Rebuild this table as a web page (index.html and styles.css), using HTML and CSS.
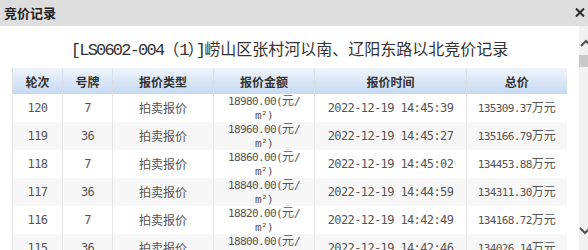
FILE: index.html
```html
<!DOCTYPE html>
<html lang="zh-CN">
<head>
<meta charset="utf-8">
<title>竞价记录</title>
<link rel="stylesheet" href="styles.css">
</head>
<body>
<div class="dialog">
  <div class="titlebar">
    <span class="title">竞价记录</span>
    <svg class="close" width="10" height="9" viewBox="0 0 10 9"><path d="M1 0.5 L9 8.5 M9 0.5 L1 8.5" stroke="#2b2b2b" stroke-width="2" fill="none"/></svg>
  </div>
  <div class="content">
    <div class="main">
      <h1 class="heading"><span class="lat">[LS0602-004</span>（<span class="lat">1</span>）<span class="lat">]</span>崂山区张村河以南、辽阳东路以北竞价记录</h1>
      <table class="records">
        <colgroup>
          <col class="c1"><col class="c2"><col class="c3"><col class="c4"><col class="c5"><col class="c6">
        </colgroup>
        <thead>
          <tr><th>轮次</th><th>号牌</th><th>报价类型</th><th>报价金额</th><th>报价时间</th><th>总价</th></tr>
        </thead>
        <tbody>
          <tr><td class="num">120</td><td class="num">7</td><td class="type">拍卖报价</td><td class="amt"><span class="num">18980.00(</span>元<span class="num">/</span><br><span class="num">m²)</span></td><td class="num">2022-12-19 14:45:39</td><td class="total"><span class="num">135309.37</span>万元</td></tr>
          <tr><td class="num">119</td><td class="num">36</td><td class="type">拍卖报价</td><td class="amt"><span class="num">18960.00(</span>元<span class="num">/</span><br><span class="num">m²)</span></td><td class="num">2022-12-19 14:45:27</td><td class="total"><span class="num">135166.79</span>万元</td></tr>
          <tr><td class="num">118</td><td class="num">7</td><td class="type">拍卖报价</td><td class="amt"><span class="num">18860.00(</span>元<span class="num">/</span><br><span class="num">m²)</span></td><td class="num">2022-12-19 14:45:02</td><td class="total"><span class="num">134453.88</span>万元</td></tr>
          <tr><td class="num">117</td><td class="num">36</td><td class="type">拍卖报价</td><td class="amt"><span class="num">18840.00(</span>元<span class="num">/</span><br><span class="num">m²)</span></td><td class="num">2022-12-19 14:44:59</td><td class="total"><span class="num">134311.30</span>万元</td></tr>
          <tr><td class="num">116</td><td class="num">7</td><td class="type">拍卖报价</td><td class="amt"><span class="num">18820.00(</span>元<span class="num">/</span><br><span class="num">m²)</span></td><td class="num">2022-12-19 14:42:49</td><td class="total"><span class="num">134168.72</span>万元</td></tr>
          <tr><td class="num">115</td><td class="num">36</td><td class="type">拍卖报价</td><td class="amt"><span class="num">18800.00(</span>元<span class="num">/</span><br><span class="num">m²)</span></td><td class="num">2022-12-19 14:42:46</td><td class="total"><span class="num">134026.14</span>万元</td></tr>
        </tbody>
      </table>
    </div>
    <div class="scrollbar">
      <svg width="17" height="224" viewBox="0 0 17 224">
        <rect x="0" y="29" width="17" height="12" fill="#c9c9c9"/>
        <polyline points="2,20 7,15 12,20" fill="none" stroke="#505050" stroke-width="2"/>
        <polyline points="1,202 6,207 11,202" fill="none" stroke="#505050" stroke-width="2"/>
      </svg>
    </div>
  </div>
</div>
</body>
</html>
```

FILE: styles.css
```css
html, body {
  margin: 0;
  padding: 0;
  background: #ffffff;
}
body {
  width: 588px;
  height: 250px;
  overflow: hidden;
  font-family: "Noto Sans CJK SC", "Liberation Sans", sans-serif;
  color: #333;
}
.dialog {
  width: 588px;
  height: 250px;
  display: flex;
  flex-direction: column;
}
.titlebar {
  height: 26px;
  flex: none;
  background: #dedede;
  display: flex;
  align-items: center;
  justify-content: space-between;
  padding: 0 3px 0 4px;
}
.title {
  font-size: 13px;
  font-weight: bold;
  color: #222;
  line-height: 26px;
}
.close {
  display: block;
  margin-top: -1px;
}
.content {
  flex: 1;
  display: flex;
  overflow: hidden;
}
.main {
  width: 579px;
  flex: none;
  padding-left: 12px;
  box-sizing: border-box;
}
.heading {
  margin: 0;
  height: 42px;
  line-height: 42px;
  font-size: 16px;
  font-weight: normal;
  text-align: center;
  color: #333;
  white-space: nowrap;
  padding: 1px 12px 0 0;
  box-sizing: border-box;
}
.lat {
  font-family: "Liberation Mono", monospace;
  font-size: 17px;
  letter-spacing: -1.8px;
}
.records {
  width: 554px;
  border-collapse: collapse;
  table-layout: fixed;
}
.c1, .c2 { width: 50px; }
.c3, .c4 { width: 101px; }
.c5 { width: 152px; }
.c6 { width: 100px; }
.records th {
  height: 26px;
  padding: 0;
  font-size: 12px;
  font-weight: bold;
  color: #333;
  background: linear-gradient(#eff4fb, #c6d9f1);
  border-left: 1px solid #d6dfea;
  text-align: center;
  vertical-align: middle;
}
.records th:first-child {
  border-left: 1px solid #e2e2e2;
}
.records td {
  height: 27px;
  padding: 0;
  text-align: center;
  vertical-align: middle;
  border-left: 1px solid #e4e4e4;
  color: #555;
  font-size: 12px;
  line-height: 12px;
}
.records tbody tr:nth-child(even) td {
  background: #f7f7f7;
}
.num {
  font-family: "DejaVu Sans Mono", monospace;
  font-size: 11px;
  letter-spacing: -0.62px;
  color: #555;
}
.type {
  font-size: 13px;
  color: #444;
}
.amt {
  line-height: 12px;
}
.amt .num {
  line-height: 12px;
}
.total {
  color: #333;
}
.scrollbar {
  width: 9px;
  flex: none;
  overflow: hidden;
  background: #f1f1f1;
}
.scrollbar svg {
  display: block;
}
```
